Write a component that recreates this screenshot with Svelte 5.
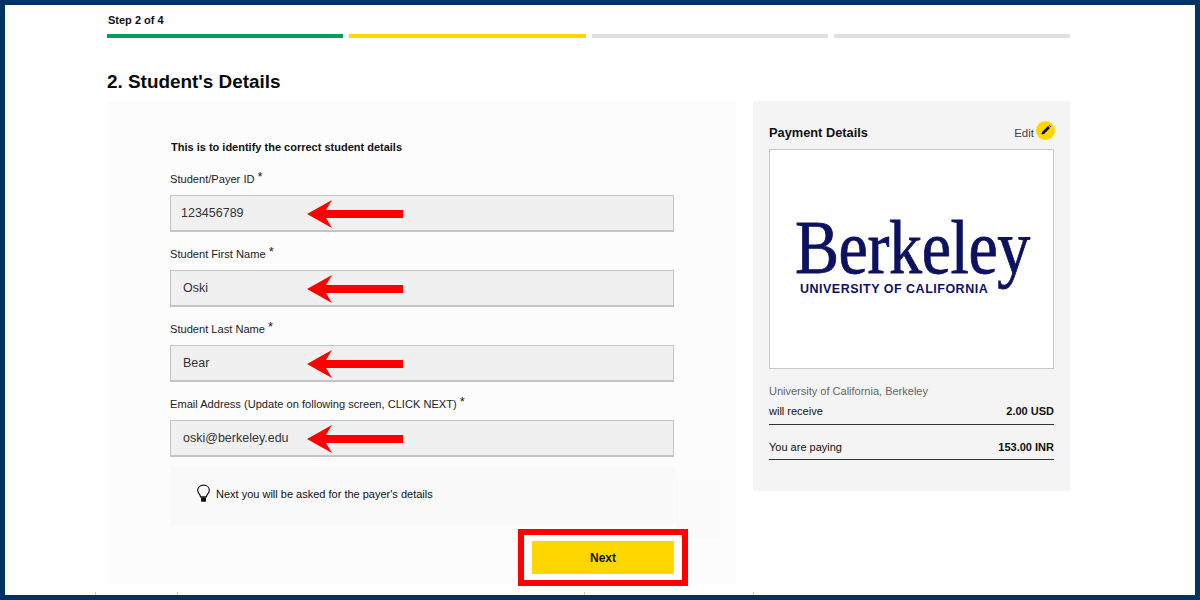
<script lang="ts">
  const steps = ['done', 'current', 'todo', 'todo'];

  const fields = [
    { label: 'Student/Payer ID', value: '123456789', indent: 'tight' },
    { label: 'Student First Name', value: 'Oski', indent: '' },
    { label: 'Student Last Name', value: 'Bear', indent: '' },
    { label: 'Email Address (Update on following screen, CLICK NEXT)', value: 'oski@berkeley.edu', indent: '' }
  ];

  const ticks = [95, 177, 584, 753];
</script>

<div class="frame">
  <div class="page">
    <div class="step-label">Step 2 of 4</div>
    <div class="steps">
      {#each steps as step}
        <div class="step {step}"></div>
      {/each}
    </div>

    <h1>2. Student's Details</h1>

    <div class="columns">
      <section class="form-panel">
        <p class="intro">This is to identify the correct student details</p>

        {#each fields as field}
          <div class="field">
            <div class="label">{field.label} <span class="req">*</span></div>
            <div class="input {field.indent}">
              {field.value}
              <svg class="arrow" width="96" height="30" viewBox="0 0 96 30">
                <path d="M0 15 L25 1 L19 11 L96 11 L96 19 L19 19 L25 29 Z" fill="#fe0000" />
              </svg>
            </div>
          </div>
        {/each}

        <div class="hint">
          <svg width="15" height="19" viewBox="0 0 18 22" fill="none" stroke="#111" stroke-width="1.400">
            <path d="M5.500 15 C5.200 12 2 10.500 2 7 C2 3.500 5 1 9 1 C13 1 16 3.500 16 7 C16 10.500 12.800 12 12.500 15 Z" />
            <rect x="6" y="15.500" width="6" height="5.500" rx="1" fill="#111" stroke="none" />
          </svg>
          <span>Next you will be asked for the payer's details</span>
        </div>
        <div class="smudge"></div>

        <div class="actions">
          <div class="callout">
            <button type="button">Next</button>
          </div>
        </div>
      </section>

      <aside class="payment-panel">
        <div class="payment-head">
          <h2>Payment Details</h2>
          <div class="edit">
            Edit
            <span class="edit-icon">
              <svg width="12" height="12" viewBox="0 0 12 12">
                <path d="M1.500 10.500 L2 8 L8 2 L10 4 L4 10 Z M8.800 1.200 L9.500 0.800 L11.200 2.500 L10.800 3.200 Z" fill="#111" />
              </svg>
            </span>
          </div>
        </div>

        <div class="logo-box">
          <div class="wordmark">Berkeley</div>
          <div class="subline">UNIVERSITY OF CALIFORNIA</div>
        </div>

        <div class="uni">University of California, Berkeley</div>
        <div class="row first">
          <span>will receive</span>
          <strong>2.00 USD</strong>
        </div>
        <div class="row">
          <span>You are paying</span>
          <strong>153.00 INR</strong>
        </div>
      </aside>
    </div>
  </div>

  {#each ticks as x}
    <span class="tick" style="left: {x}px"></span>
  {/each}
</div>

<style>
  :global(body) {
    margin: 0;
    background: #fff;
  }

  .frame {
    position: relative;
    box-sizing: border-box;
    width: 1200px;
    height: 600px;
    border: 5px solid #003262;
    overflow: hidden;
    font-family: "Liberation Sans", Arial, sans-serif;
    color: #111;
  }

  .frame > .tick {
    position: absolute;
    bottom: 0;
    width: 1px;
    height: 3px;
    margin-left: -5px;
    background: #c8c8c8;
  }

  .page {
    padding: 0 125px 0 102px;
  }

  .step-label {
    margin-left: 1px;
    padding-top: 9px;
    height: 13px;
    font-size: 11px;
    line-height: 13px;
    font-weight: 700;
  }

  .steps {
    display: grid;
    grid-template-columns: repeat(4, 1fr);
    gap: 6px;
    margin-top: 7px;
  }

  .step {
    height: 4px;
    background: #e0e0e0;
  }

  .step.done {
    background: #00a05a;
  }

  .step.current {
    background: #ffd700;
  }

  h1 {
    margin: 32px 0 0;
    font-size: 18.900px;
    line-height: 23px;
    font-weight: 700;
    color: #0a0a0a;
  }

  .columns {
    display: grid;
    grid-template-columns: 630px 317px;
    gap: 16px;
    align-items: start;
    margin-top: 8px;
  }

  .form-panel {
    position: relative;
    box-sizing: border-box;
    height: 483px;
    padding: 39px 63px 0;
    background: #fcfcfc;
  }

  .intro {
    margin: 0 0 17px 1px;
    font-size: 11px;
    line-height: 14px;
    font-weight: 700;
  }

  .field {
    margin-bottom: 14px;
  }

  .label {
    height: 15px;
    margin-bottom: 9px;
    font-size: 11.100px;
    line-height: 15px;
    color: #222;
  }

  .req {
    position: relative;
    top: -2px;
    font-size: 13px;
  }

  .input {
    position: relative;
    box-sizing: border-box;
    width: 504px;
    height: 37px;
    padding: 0 12px;
    border: 1px solid #c4c4c4;
    border-bottom-width: 2px;
    background: #f0f0f0;
    font-size: 12.500px;
    line-height: 35px;
    color: #333;
  }

  .input.tight {
    padding-left: 10px;
  }

  .arrow {
    position: absolute;
    left: 136px;
    top: 3px;
  }

  .hint {
    display: flex;
    align-items: center;
    gap: 5px;
    box-sizing: border-box;
    width: 504px;
    height: 58px;
    margin-top: -4px;
    padding: 0 0 5px 26px;
    background: #f9f9f9;
    font-size: 11px;
    color: #111;
  }

  .smudge {
    position: absolute;
    left: 569px;
    top: 379px;
    width: 44px;
    height: 57px;
    background: #fafafa;
  }

  .actions {
    display: flex;
    justify-content: flex-end;
    width: 504px;
    margin-top: 4px;
  }

  .callout {
    position: relative;
    margin-right: -14px;
    padding: 6px 8px;
    border: 6px solid #fe0000;
    background: #fff;
  }

  button {
    display: block;
    width: 142px;
    height: 33px;
    padding: 0;
    border: 0;
    background: #ffd700;
    font: 700 12px "Liberation Sans", Arial, sans-serif;
    color: #111;
  }

  .payment-panel {
    box-sizing: border-box;
    height: 390px;
    padding: 20px 16px 0;
    background: #f4f4f4;
  }

  .payment-head {
    display: flex;
    justify-content: space-between;
    align-items: flex-end;
    height: 28px;
  }

  h2 {
    margin: 0 0 5px;
    font-size: 12.800px;
    line-height: 22px;
    font-weight: 700;
  }

  .edit {
    display: flex;
    align-items: center;
    gap: 2px;
    margin-right: -1px;
    margin-bottom: 6px;
    font-size: 11.500px;
    line-height: 20px;
    color: #444;
  }

  .edit-icon {
    display: flex;
    align-items: center;
    justify-content: center;
    width: 19px;
    height: 19px;
    margin-top: -6px;
    border-radius: 50%;
    background: #ffd700;
  }

  .logo-box {
    box-sizing: border-box;
    height: 220px;
    padding: 66px 0 0 25px;
    border: 1px solid #c8c8c8;
    background: #fff;
    color: #0c1260;
  }

  .wordmark {
    height: 62px;
    font-family: "Liberation Serif", "Times New Roman", serif;
    font-size: 76px;
    line-height: 62px;
    letter-spacing: -0.500px;
    -webkit-text-stroke: 0.800px #0c1260;
    transform: scaleX(0.869);
    transform-origin: left center;
  }

  .subline {
    margin: 4px 0 0 5px;
    font-size: 12.500px;
    line-height: 14px;
    font-weight: 700;
    letter-spacing: 0.500px;
  }

  .uni {
    margin-top: 15px;
    font-size: 11px;
    line-height: 14px;
    color: #666;
  }

  .row {
    display: flex;
    justify-content: space-between;
    align-items: flex-start;
    box-sizing: border-box;
    height: 35px;
    padding-top: 15px;
    border-bottom: 1px solid #333;
    font-size: 11px;
    line-height: 14px;
    color: #111;
  }

  .row.first {
    height: 21px;
    margin-top: 6px;
    padding-top: 0;
  }

  .row strong {
    font-weight: 700;
  }
</style>
